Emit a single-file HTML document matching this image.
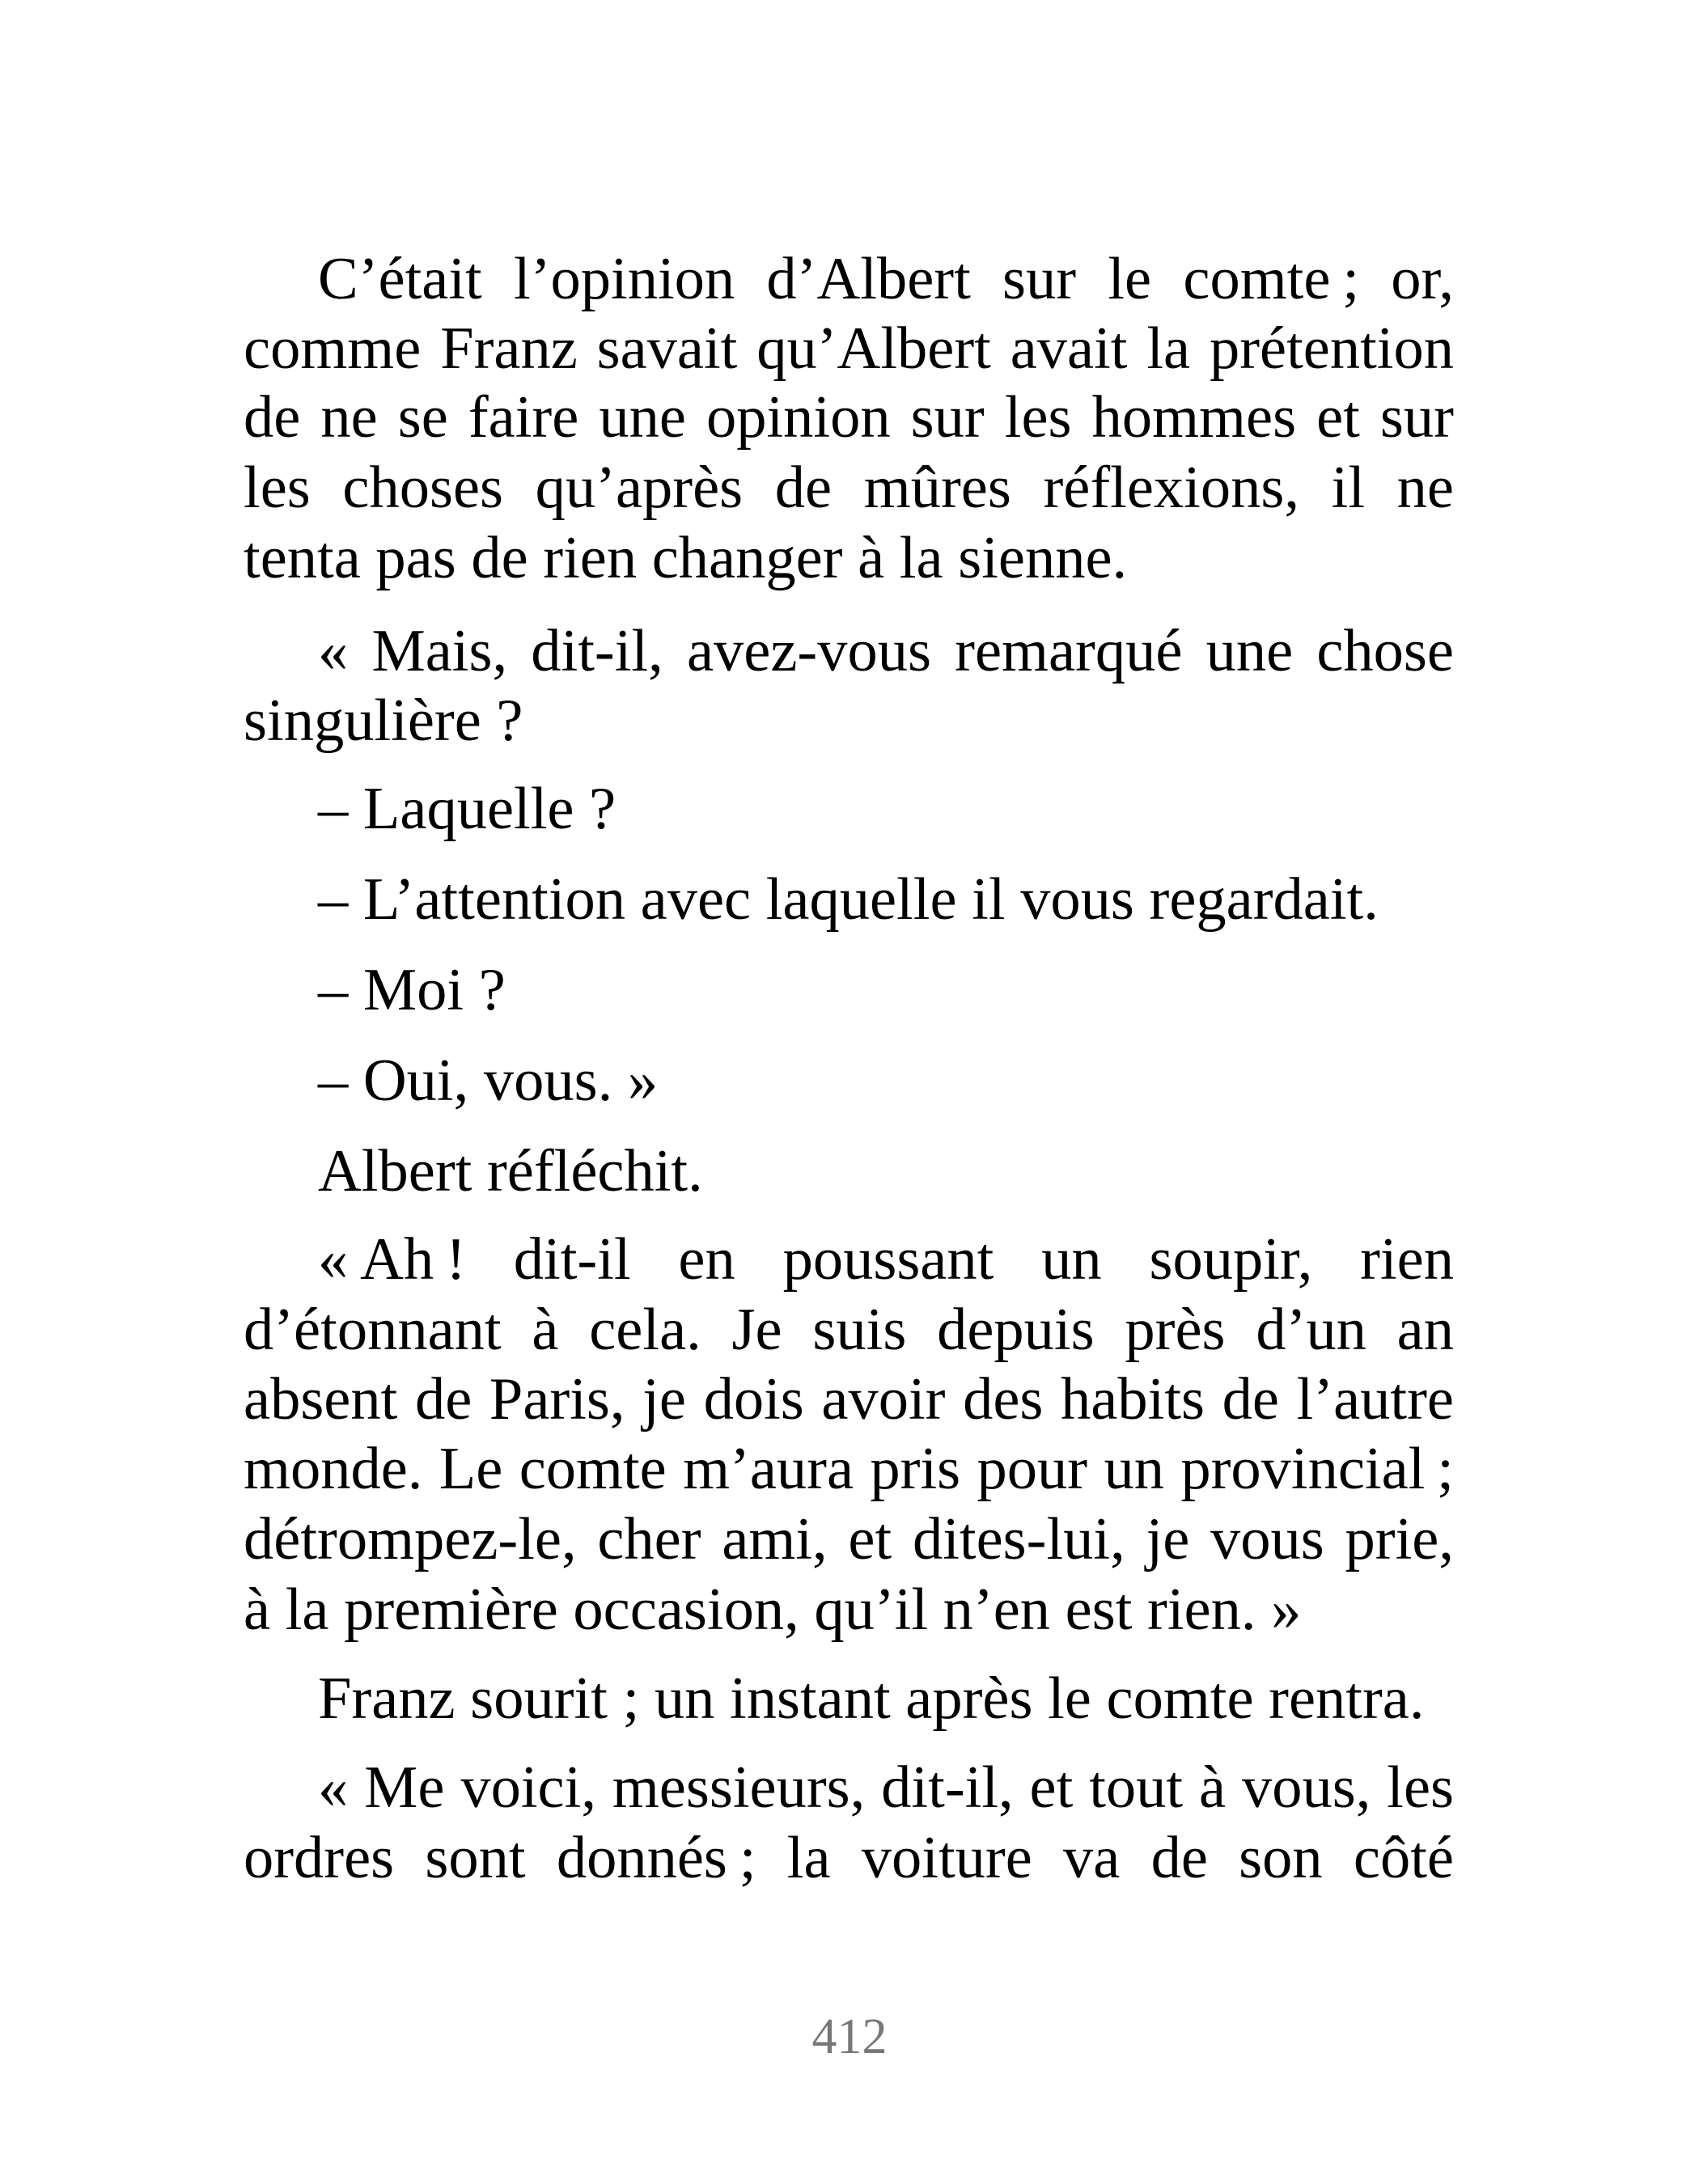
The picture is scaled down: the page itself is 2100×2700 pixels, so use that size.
<!DOCTYPE html>
<html><head><meta charset="utf-8"><style>
html,body{margin:0;padding:0;background:#fff}
body{width:2100px;height:2700px;position:relative;overflow:hidden;font-family:"Liberation Serif",serif;font-size:74.5px;color:#000}
.l{position:absolute;left:301px;width:1496px;line-height:73px;white-space:nowrap;height:73px}
.j{text-align:justify;text-align-last:justify}
.i{left:393px;width:1404px}
.pn{position:absolute;left:0;width:2100px;text-align:center;font-size:62px;line-height:62px;color:#777}
</style></head><body>
<div class="l i j" style="top:309px">C’était l’opinion d’Albert sur le comte&#8239;; or,</div>
<div class="l j" style="top:395px">comme Franz savait qu’Albert avait la prétention</div>
<div class="l j" style="top:480px">de ne se faire une opinion sur les hommes et sur</div>
<div class="l j" style="top:567px">les choses qu’après de mûres réflexions, il ne</div>
<div class="l" style="top:654px">tenta pas de rien changer à la sienne.</div>
<div class="l i j" style="top:769px">«&nbsp;Mais, dit-il, avez-vous remarqué une chose</div>
<div class="l" style="top:855px">singulière ?</div>
<div class="l i" style="top:964px">– Laquelle ?</div>
<div class="l i" style="top:1076px">– L’attention avec laquelle il vous regardait.</div>
<div class="l i" style="top:1188px">– Moi ?</div>
<div class="l i" style="top:1300px">– Oui, vous. »</div>
<div class="l i" style="top:1412px">Albert réfléchit.</div>
<div class="l i j" style="top:1521px">«&#8239;Ah&#8239;! dit-il en poussant un soupir, rien</div>
<div class="l j" style="top:1608px">d’étonnant à cela. Je suis depuis près d’un an</div>
<div class="l j" style="top:1694px">absent de Paris, je dois avoir des habits de l’autre</div>
<div class="l j" style="top:1780px">monde. Le comte m’aura pris pour un provincial&#8239;;</div>
<div class="l j" style="top:1867px">détrompez-le, cher ami, et dites-lui, je vous prie,</div>
<div class="l" style="top:1954px">à la première occasion, qu’il n’en est rien. »</div>
<div class="l i" style="top:2064px">Franz sourit ; un instant après le comte rentra.</div>
<div class="l i j" style="top:2174px">« Me voici, messieurs, dit-il, et tout à vous, les</div>
<div class="l j" style="top:2261px">ordres sont donnés&#8239;; la voiture va de son côté</div>
<div class="pn" style="top:2487px">412</div>
</body></html>
